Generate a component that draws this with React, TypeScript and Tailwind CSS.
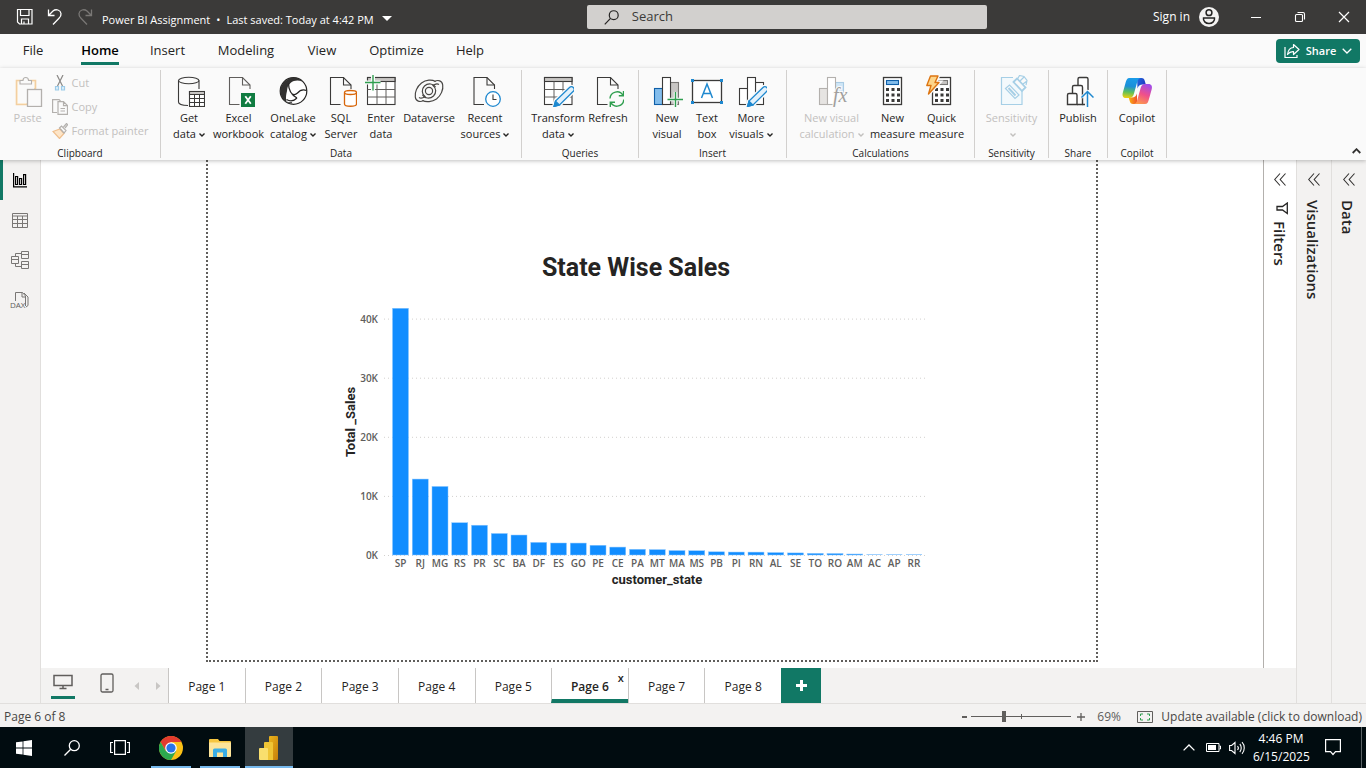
import React from "react";

type Kids = { children: React.ReactNode };

const INK = "#3b3a39";
const DIM = "#b3b0ad";
const BLUE = "#1e88cf";
const GREEN = "#2f9e4f";

function Ico({ children }: Kids) {
  return (
    <svg width="32" height="32" viewBox="0 0 32 32" fill="none" stroke={INK} strokeWidth="1.1" className="block shrink-0" aria-hidden="true">
      {children}
    </svg>
  );
}

function Doc({ x = 5.5 }: { x?: number }) {
  return (
    <g transform={`translate(${x} 0)`}>
      <path d="M10 29.5H0V2.500H13L20.500 10V14" fill="none" />
      <path d="M13 2.500V10H20.500" />
    </g>
  );
}

function Pencil({ x }: { x: number }) {
  return (
    <g transform={`translate(${x} 0)`} stroke={BLUE}>
      <path d="M0.500 31.500 2 26 16 12.500a2.500 2.500 0 0 1 3.800 3.800L6 30Z" fill="#fafafa" stroke="#fafafa" strokeWidth="4" />
      <path d="M0.500 31.500 2 26 16 12.500a2.500 2.500 0 0 1 3.800 3.800L6 30Z" fill="#e3f1fb" strokeWidth="1.300" />
      <path d="M0.500 31.500 2 26 6 30Z" fill={BLUE} />
    </g>
  );
}

const GetDataIcon = () => (
  <Ico>
    <path d="M15 30.500C9 30.500 5.500 29 5.500 27V5.500M26 5.500V14" />
    <ellipse cx="15.750" cy="5.500" rx="10.250" ry="3.300" />
    <rect x="16.500" y="16.500" width="15" height="15" fill="#fff" />
    <path d="M16.500 16.500h15v3h-15z" fill="#c8c6c4" />
    <path d="M16.500 23.500h15M16.500 27.500h15M21.500 19.500v12M26.500 19.500v12" strokeWidth="1" />
  </Ico>
);

const ExcelIcon = () => (
  <Ico>
    <g stroke="#605e5c"><Doc x={6.5} /></g>
    <rect x="18" y="18" width="14" height="14" fill="#107c41" stroke="none" />
    <path d="m22.300 21.300 5.500 7.500M27.800 21.300l-5.500 7.500" stroke="#fff" strokeWidth="1.800" />
  </Ico>
);

const OneLakeIcon = () => (
  <Ico>
    <circle cx="16.500" cy="16" r="13.300" fill="#fff" stroke="#252423" strokeWidth="1.200" />
    <path d="M10.500 4.500C15 1 22 2 25 6.500c-4-1.500-8-1.200-11.500 1.500L11 11c-1.500 6 .5 11.500 4.500 17.500C8 28.500 2.500 22 3.300 14.500 4 10 7 6.500 10.500 4.500Z" fill="#323130" stroke="none" />
    <path d="M11.500 9.500c1 6 3.500 10.500 8.500 13-2.500 4-6 6-10.500 4-1.500-5 .5-10 2-17Z" fill="#fff" stroke="none" />
    <path d="M11.500 8.500c0 7 3 11.500 8.500 14.500M20 23c-3 3-7 3.500-10.500 1.500M14.500 18.500c2.500 2 4 1.500 6-.5 2.500-3 5-4 9-2.500" strokeWidth="1.300" stroke="#252423" />
  </Ico>
);

const SqlIcon = () => (
  <Ico>
    <Doc />
    <path d="M19.500 17.500v11.500c0 3 12 3 12 0V17.500" fill="#fff" stroke="#d8660a" strokeWidth="1.300" />
    <ellipse cx="25.500" cy="17.500" rx="6" ry="2" fill="#fff" stroke="#d8660a" strokeWidth="1.300" />
  </Ico>
);

function TableShape({ x }: { x: number }) {
  return (
    <g transform={`translate(${x} 0)`}>
      <rect x="0" y="2.500" width="27.500" height="27" fill="#fff" />
      <rect x="0" y="2.500" width="27.500" height="4" fill="#c8c6c4" />
      <path d="M0 14.500h27.500M0 22h27.500M9.500 6.500v23M18.500 6.500v23" stroke="#605e5c" strokeWidth="1" />
    </g>
  );
}

const EnterIcon = () => (
  <Ico>
    <TableShape x={2.5} />
    <path d="M0 7.500h15.500M8 0v15.500" stroke="#fafafa" strokeWidth="4" />
    <path d="M0 7.500h15.500M8 0v15.500" stroke={GREEN} strokeWidth="1.400" />
  </Ico>
);

const DataverseIcon = () => (
  <Ico>
    <g strokeWidth="1.200" stroke="#484644">
      <path d="M22.500 6.500C19 4.500 13 4.500 8.500 8 4 11.500 1.500 17.500 2.300 22c.5 4.500 4.700 5.500 8.200 3.500" />
      <path d="M9.500 25.500C13 27.500 19 27 23.500 24 28 20.500 30.500 14.500 29.700 10c-.5-4.500-4.700-5.500-8.200-3.500" />
      <path d="M22.500 12C20.500 8.500 15 7.800 11.500 11 8.500 14 8.500 19 12 21.500c-2 1.500-4.500 2-6 1" />
      <path d="M9.500 20c2 3.500 7.500 4.200 11 1 3-3 3-8-.5-10.500 2-1.500 4.500-2 6-1" />
      <circle cx="16" cy="16" r="3.600" />
    </g>
  </Ico>
);

const RecentIcon = () => (
  <Ico>
    <Doc x={5} />
    <circle cx="24" cy="24" r="7.300" fill="#fff" stroke={BLUE} strokeWidth="1.300" />
    <path d="M24 19.500v5h3.500" />
  </Ico>
);

const TransformIcon = () => (
  <Ico>
    <TableShape x={2.5} />
    <Pencil x={11.5} />
  </Ico>
);

const RefreshIcon = () => (
  <Ico>
    <Doc x={5.5} />
    <g stroke={GREEN} strokeWidth="1.400">
      <path d="M18 23.500a7 7 0 0 1 13-3.200M31.800 24.500a7 7 0 0 1-13 3.200" />
      <path d="M31.500 16v4.700h-4.700M18.300 32v-4.700h4.700" />
    </g>
  </Ico>
);

const NewVisualIcon = () => (
  <Ico>
    <rect x="3.500" y="13.500" width="8" height="16" fill="#83bdec" stroke="#0f5fa8" />
    <rect x="19.500" y="7.500" width="8" height="22" fill="#c8c6c4" stroke="#797775" />
    <rect x="11.500" y="2.500" width="8" height="27" fill="#fff" />
    <path d="M16.500 24.500H32M24.500 17v15.500" stroke="#fafafa" strokeWidth="3.500" />
    <path d="M16.500 24.500H32M24.500 17v15.500" stroke={GREEN} strokeWidth="1.400" />
  </Ico>
);

const TextBoxIcon = () => (
  <Ico>
    <rect x="1.500" y="5.500" width="29" height="22" fill="#fff" strokeWidth="1.300" />
    <path d="M0 4h3v3H0zM29 4h3v3h-3zM0 26h3v3H0zM29 26h3v3h-3z" fill={BLUE} stroke="none" />
    <path d="m10.500 23 5.500-14 5.500 14M12.300 18.500h7.400" stroke={BLUE} strokeWidth="1.500" />
  </Ico>
);

const MoreVisualsIcon = () => (
  <Ico>
    <rect x="4.500" y="13.500" width="8" height="16" fill="#fff" />
    <rect x="20.500" y="7.500" width="8" height="22" fill="#fff" />
    <rect x="12.500" y="2.500" width="8" height="27" fill="#fff" />
    <Pencil x={12} />
  </Ico>
);

const VisualCalcIcon = () => (
  <Ico>
    <g stroke={DIM}>
      <rect x="3.500" y="13.500" width="8" height="16" fill="#e6e4e2" />
      <rect x="19.500" y="7.500" width="8" height="10" fill="#cfe6f7" stroke="#a9cbe4" />
      <rect x="11.500" y="2.500" width="8" height="27" fill="#fff" />
    </g>
    <text x="17" y="27" fontSize="20" fontStyle="italic" fontFamily="'Liberation Serif', serif" fill="#a19f9d" stroke="#fafafa" strokeWidth="2" paintOrder="stroke">fx</text>
  </Ico>
);

function Calculator({ gray }: { gray?: boolean }) {
  return (
    <>
      <rect x="6.500" y="2.500" width="18" height="27" fill="#fff" strokeWidth="1.300" />
      <rect x="9.500" y="5.500" width="12" height="4" fill={gray ? "#c8c6c4" : "#83bdec"} stroke={gray ? "#797775" : "#0f5fa8"} />
      {[13, 18.5, 24].map((y) => (
        <path key={y} d={`M9 ${y}h3v3h-3zM14.500 ${y}h3v3h-3zM20 ${y}h3v3h-3z`} fill={INK} stroke="none" />
      ))}
    </>
  );
}

const MeasureIcon = () => <Ico><Calculator /></Ico>;

const QuickIcon = () => (
  <Ico>
    <Calculator gray />
    <path d="M4.500 1H12L9 7.500h4L2.500 19l2.500-8.500H.800Z" fill="#fafafa" stroke="#fafafa" strokeWidth="4" />
    <path d="M4.500 1H12L9 7.500h4L2.500 19l2.500-8.500H.800Z" fill="#fdd58a" stroke="#dd7410" strokeWidth="1.400" strokeLinejoin="round" />
  </Ico>
);

const SensitivityIcon = () => (
  <Ico>
    <g stroke="#a6cfe6" strokeWidth="1.200">
      <path d="M17 2.500H5.500v27h20.500V16" fill="#f3f9fc" />
      <path d="m9.500 13.500 4-3.500 9.500 10-4 3.500Z" fill="#fafafa" />
      <path d="m12.500 13 7 7.500" strokeWidth="2" />
      <path d="m17.500 7 3.500-3.500 8.500 9L26 16Z" fill="#fafafa" strokeWidth="1.800" />
      <path d="m21.500 4 2-3.500 4.500 1 3 4-1 4.500M24 6l4-4M27 9l4-3" />
    </g>
  </Ico>
);

const PublishIcon = () => (
  <Ico>
    <g strokeWidth="1.400" fill="#fff">
      <path d="M16 10.500V4a1.500 1.500 0 0 1 1.500-1.500h7A1.500 1.500 0 0 1 26 4v11" />
      <path d="M10.500 18.500V12A1.500 1.500 0 0 1 12 10.500h7A1.500 1.500 0 0 1 20.500 12v17.500H15" />
      <path d="M5.500 29.500V20A1.500 1.500 0 0 1 7 18.500h6.500A1.500 1.500 0 0 1 15 20v9.500ZM20.500 29.500h2.500" />
    </g>
    <path d="M25.500 32V16.500M19.500 22.500l6-6 6 6" stroke="#fafafa" strokeWidth="3" />
    <path d="M25.500 32V16.500M19.500 22.500l6-6 6 6" stroke={BLUE} strokeWidth="1.500" />
  </Ico>
);

const CopilotIcon = () => (
  <Ico>
    <defs>
      <linearGradient id="cpA" x1="0.300" y1="0" x2="0.200" y2="1">
        <stop offset="0" stopColor="#1a9be8" />
        <stop offset="0.400" stopColor="#1b8fd8" />
        <stop offset="0.700" stopColor="#5fc05a" />
        <stop offset="1" stopColor="#f5cf0c" />
      </linearGradient>
      <linearGradient id="cpB" x1="0.700" y1="0" x2="0.300" y2="1">
        <stop offset="0" stopColor="#a24be8" />
        <stop offset="0.500" stopColor="#f0508a" />
        <stop offset="1" stopColor="#fd9a4c" />
      </linearGradient>
      <linearGradient id="cpC" x1="0" y1="0" x2="1" y2="0.500">
        <stop offset="0" stopColor="#1f6fe0" />
        <stop offset="1" stopColor="#2337c0" />
      </linearGradient>
      <linearGradient id="cpD" x1="0" y1="0" x2="1" y2="0">
        <stop offset="0" stopColor="#fbb40f" />
        <stop offset="1" stopColor="#f0522a" />
      </linearGradient>
    </defs>
    <g stroke="none">
      <path d="M16 3h4.500c2 0 2.800 1.300 3.300 3l1 3.500h-3c-3 0-4.500 1.500-5.300 4Z" fill="url(#cpC)" />
      <path d="M16 29h-4c-2 0-2.800-1.300-3.300-3l-1-3.500h3c3 0 4.500-1.500 5.300-4Z" fill="url(#cpD)" />
      <path d="M8.500 3H20c-2 0-3 1.300-3.800 4L13 18.500c-.8 2.800-2 4.500-4.700 4.500H5c-3 0-4-2.300-3.200-5.300L4.500 8C5.300 5 6 3 8.500 3Z" fill="url(#cpA)" />
      <path d="M24 29H12.500c2 0 3-1.300 3.800-4l3.200-11.500C20.300 10.700 21.500 9 24.200 9h3.300c3 0 4 2.300 3.200 5.300L28 24c-.8 3-1.500 5-4 5Z" fill="url(#cpB)" />
    </g>
  </Ico>
);

const PasteIcon = () => (
  <Ico>
    <path d="M4.500 5.500H23.500V14h-8v15.500h-11Z" fill="#fef4e2" stroke="#f3cfa0" strokeWidth="1.600" />
    <path d="M6 7.500h16V14h-7v14H6Z" fill="#fafafa" stroke="none" />
    <path d="M8 9V5.500h3c0-4 5.500-4 5.500 0h3V9Z" fill="#fafafa" stroke={DIM} />
    <rect x="15.500" y="14.500" width="14" height="17" fill="#fafafa" stroke={DIM} strokeWidth="1.300" />
  </Ico>
);

function Chevron({ className = "inline-block" }: { className?: string }) {
  return (
    <svg width="6" height="6" viewBox="0 0 6 6" fill="none" stroke="currentColor" strokeWidth="1.400" className={className} aria-hidden="true">
      <path d="M.5 1.500 3 4l2.500-2.500" />
    </svg>
  );
}

type Cmd = { w: string; icon: React.ReactNode; a: string; b?: string; drop?: boolean; off?: boolean };

function Command({ w, icon, a, b, drop, off }: Cmd) {
  return (
    <button disabled={off} className={`flex h-full shrink-0 flex-col items-center ${w} ${off ? "text-[#c2c0be]" : "text-[#252423]"}`}>
      {icon}
      <span className="mt-[3px] text-center text-[11px] leading-4 whitespace-nowrap">
        {a}
        <br />
        {b}
        {drop && <Chevron className="ml-[3px] inline-block" />}
      </span>
    </button>
  );
}

function Group({ w, name, children }: Kids & { w: string; name: string }) {
  return (
    <section aria-label={name} className={`flex shrink-0 flex-col border-r border-[#d2d0ce] ${w}`}>
      <div className="flex h-[76px] shrink-0 justify-center pt-[5px]">{children}</div>
      <div className="text-center text-[10px] leading-[14px] text-[#252423]">{name}</div>
    </section>
  );
}

function TitleBar() {
  return (
    <header className="flex h-[34px] items-center bg-[#3b3a39] text-xs text-white">
      <div className="flex w-[587px] shrink-0 items-center pl-4">
        <button aria-label="Save" className="w-[31px]">
          <svg width="18" height="18" viewBox="0 0 18 18" fill="none" stroke="#fff" strokeWidth="1.200"><path d="M1.500 1.500h14.500v14.500H3.500l-2-2ZM4.500 1.500v6h8.500v-6M5.500 16v-5h7v5M8 16v-2.500" /></svg>
        </button>
        <button aria-label="Undo" className="w-[30px]">
          <svg width="16" height="18" viewBox="0 0 16 18" fill="none" stroke="#fff" strokeWidth="1.300"><path d="M1.500 1.500v6h6M1.500 7.500 6 3c3-2.500 7.500-1 8 2.500.3 2-.5 3.300-2 4.800L6 16.500" /></svg>
        </button>
        <button aria-label="Redo" disabled className="w-[25px]">
          <svg width="16" height="18" viewBox="0 0 16 18" fill="none" stroke="#797775" strokeWidth="1.300"><path d="M14.500 1.500v6h-6M14.500 7.500 10 3C7 .5 2.500 2 2 5.500c-.3 2 .5 3.300 2 4.800l6 6.200" /></svg>
        </button>
        <button className="flex items-center gap-[6px] pt-[6px] text-[11px] whitespace-nowrap">
          <span>Power BI Assignment</span>
          <span>•</span>
          <span>Last saved: Today at 4:42 PM</span>
          <svg width="10" height="5" viewBox="0 0 10 5" className="mb-1 ml-[2px]" fill="#fff"><path d="M0 0h10L5 5Z" /></svg>
        </button>
      </div>
      <label className="flex h-6 w-[400px] shrink items-center rounded-[2px] bg-[#d2d0ce] pl-[17px] text-[#3b3a39]">
        <svg width="17" height="17" viewBox="0 0 17 17" fill="none" stroke="#252423" strokeWidth="1.300" aria-hidden="true"><circle cx="10.500" cy="6" r="4.800" /><path d="M7 9.500.800 16" /></svg>
        <input type="text" aria-label="Search" placeholder="Search" className="ml-3 w-full bg-transparent text-[13px] outline-none placeholder:text-[#3b3a39]" />
      </label>
      <div className="ml-auto flex items-center">
        <button className="flex items-center gap-[9px]">
          Sign in
          <svg width="20" height="20" viewBox="0 0 20 20"><circle cx="10" cy="10" r="10" fill="#f3f2f1" /><g fill="none" stroke="#252423" strokeWidth="1.500"><circle cx="10" cy="5.700" r="2.900" /><path d="M4.500 11h11c.5 3-2 5.500-5.500 5.500S4 14 4.500 11Z" /></g></svg>
        </button>
        <div className="flex pl-[15px]">
          <button aria-label="Minimize" className="flex h-[34px] w-11 items-center justify-center"><svg width="12" height="12" viewBox="0 0 12 12" stroke="#fff"><path d="M1 6.500h10" /></svg></button>
          <button aria-label="Restore" className="flex h-[34px] w-11 items-center justify-center"><svg width="12" height="12" viewBox="0 0 12 12" stroke="#fff" fill="none" strokeWidth="1.100"><rect x="1.500" y="3.500" width="7" height="7" rx="1" /><path d="M3.500 1.500H9A1.500 1.500 0 0 1 10.500 3v5.500" /></svg></button>
          <button aria-label="Close" className="flex h-[34px] w-11 items-center justify-center"><svg width="12" height="12" viewBox="0 0 12 12" stroke="#fff" strokeWidth="1.200"><path d="m1 1 10 10M11 1 1 11" /></svg></button>
        </div>
      </div>
    </header>
  );
}

function MenuBar() {
  const tabs: [string, string][] = [
    ["File", "w-[66px]"], ["Home", "w-[68px]"], ["Insert", "w-[67px]"], ["Modeling", "w-[90px]"],
    ["View", "w-[62px]"], ["Optimize", "w-[87px]"], ["Help", "w-[60px]"],
  ];
  return (
    <nav className="flex h-[34px] items-center bg-[#fafafa] text-[13px] text-[#252423]">
      {tabs.map(([name, w]) => (
        <button key={name} className={`flex h-full shrink-0 justify-center pt-[6px] ${w}`}>
          <span className={name === "Home" ? "h-[25px] border-b-[3px] border-[#117865] leading-5 font-semibold text-black" : "leading-5"}>{name}</span>
        </button>
      ))}
      <button className="mr-[6px] ml-auto flex h-6 w-[84px] items-center justify-center gap-[6px] rounded-[4px] bg-[#117865] text-[11px] font-semibold text-white">
        <svg width="16" height="16" viewBox="0 0 16 16" fill="none" stroke="#fff" strokeWidth="1.200"><path d="M1 4v10.500h12V12" /><path d="M9.500 1.500 15 6.500l-5.500 5V8.700C7 8.500 5 9.500 3.500 11.500 4 7.500 6 4.700 9.500 4.500Z" strokeLinejoin="round" /></svg>
        Share
        <svg width="10" height="10" viewBox="0 0 10 10" fill="none" stroke="#fff" strokeWidth="1.300"><path d="m.7 2.700 4.300 4.300 4.300-4.300" /></svg>
      </button>
    </nav>
  );
}

function SmallCmd({ children, name }: Kids & { name: string }) {
  return (
    <button disabled className="flex h-6 items-center gap-1 text-[11px] whitespace-nowrap text-[#c2c0be]">
      <svg width="16" height="16" viewBox="0 0 16 16" fill="none" stroke={DIM} strokeWidth="1.200" aria-hidden="true">{children}</svg>
      {name}
    </button>
  );
}

function Ribbon() {
  return (
    <div className="relative z-10 flex h-[92px] items-stretch bg-[#fafafa] pt-[2px] pb-[2px] shadow-[0_1px_4px_rgba(0,0,0,0.25)]">
      <Group w="w-[161px]" name="Clipboard">
        <Command w="w-8" icon={<PasteIcon />} a="Paste" off />
        <div className="-mt-[4px] ml-2 flex flex-col">
          <SmallCmd name="Cut">
            <path d="M5 0l5.500 11M11 0 5.500 11" stroke="#8a8886" />
            <path d="M3.500 11.500h3v3.500h-3zM9.500 11.500h3v3.500h-3z" stroke="#9ccbe8" fill="#dceefa" />
          </SmallCmd>
          <SmallCmd name="Copy">
            <path d="M5 13.500H.6V.6h6.500L8.500 2" />
            <path d="M6 2.600h5.500l4 4v8.800H6ZM11.500 2.600v4h4M8.500 9.500h4.500M8.500 12h4.500" />
          </SmallCmd>
          <SmallCmd name="Format painter">
            <path d="m1 8.500 7-2.500 4 4.500-4.500 5Z" fill="#fde5c8" stroke="#efbf8e" />
            <path d="m7.500 5 2-2 4.500 4.500-2 2.500ZM11.500 4l3-3.500 1.200 1.200L13 5" />
          </SmallCmd>
        </div>
      </Group>
      <Group w="w-[361px]" name="Data">
        <div className="flex pr-[3px]">
          <Command w="w-[46px]" icon={<GetDataIcon />} a="Get" b="data" drop />
          <Command w="w-[53px]" icon={<ExcelIcon />} a="Excel" b="workbook" />
          <Command w="w-[56px]" icon={<OneLakeIcon />} a="OneLake" b="catalog" drop />
          <Command w="w-[40px]" icon={<SqlIcon />} a="SQL" b="Server" />
          <Command w="w-[40px]" icon={<EnterIcon />} a="Enter" b="data" />
          <Command w="w-[56px]" icon={<DataverseIcon />} a="Dataverse" />
          <Command w="w-[56px]" icon={<RecentIcon />} a="Recent" b="sources" drop />
        </div>
      </Group>
      <Group w="w-[117px]" name="Queries">
        <Command w="w-[56px]" icon={<TransformIcon />} a="Transform" b="data" drop />
        <Command w="w-[44px]" icon={<RefreshIcon />} a="Refresh" />
      </Group>
      <Group w="w-[148px]" name="Insert">
        <div className="flex pr-[3px]">
          <Command w="w-[40px]" icon={<NewVisualIcon />} a="New" b="visual" />
          <Command w="w-[40px]" icon={<TextBoxIcon />} a="Text" b="box" />
          <Command w="w-[48px]" icon={<MoreVisualsIcon />} a="More" b="visuals" drop />
        </div>
      </Group>
      <Group w="w-[188px]" name="Calculations">
        <Command w="w-[74px]" icon={<VisualCalcIcon />} a="New visual" b="calculation" drop off />
        <Command w="w-[48px]" icon={<MeasureIcon />} a="New" b="measure" />
        <Command w="w-[50px]" icon={<QuickIcon />} a="Quick" b="measure" />
      </Group>
      <Group w="w-[74px]" name="Sensitivity">
        <Command w="w-[60px]" icon={<SensitivityIcon />} a="Sensitivity" drop off />
      </Group>
      <Group w="w-[59px]" name="Share">
        <Command w="w-[50px]" icon={<PublishIcon />} a="Publish" />
      </Group>
      <Group w="w-[59px]" name="Copilot">
        <Command w="w-[50px]" icon={<CopilotIcon />} a="Copilot" />
      </Group>
      <button aria-label="Collapse ribbon" className="mr-[5px] ml-auto self-end pb-1">
        <svg width="9" height="6" viewBox="0 0 9 6" fill="none" stroke="#323130" strokeWidth="1.800"><path d="m.7 5 3.800-3.800L8.300 5" /></svg>
      </button>
    </div>
  );
}

function ViewRail() {
  const btn = "flex h-10 w-full items-center justify-center";
  return (
    <nav className="flex w-[41px] shrink-0 flex-col border-r border-[#e1dfdd] bg-[#f3f2f1]">
      <button aria-label="Report view" className={`${btn} border-l-[3px] border-[#117865] pr-[3px]`}>
        <svg width="14" height="15" viewBox="0 0 14 15" fill="none" stroke="#000" strokeWidth="1.200"><path d="M.6 0v13.900H14" /><path d="M2.600 3.500h2v8h-2zM6.600 5.500h2v6h-2zM10.600 1.600h2v9.900h-2z" /></svg>
      </button>
      <button aria-label="Table view" className={btn}>
        <svg width="16" height="15" viewBox="0 0 16 15" fill="none" stroke="#797775"><path d="M.5.500h15v14H.5ZM.5 3h15M.5 6.500h15M.5 10.500h15M5.500 3v11.500M10.500 3v11.500" /></svg>
      </button>
      <button aria-label="Model view" className={btn}>
        <svg width="18" height="18" viewBox="0 0 18 18" fill="none" stroke="#797775"><path d="M.5 5.500h7v7h-7ZM.5 8.500h7M10.500.500h7v7h-7ZM10.500 3.500h7M10.500 10.500h7v7h-7ZM10.500 13.500h7M4.500 5.500v-3h6M4.500 12.500v3h6" /></svg>
      </button>
      <button aria-label="DAX query view" className={btn}>
        <svg width="20" height="18" viewBox="0 0 20 18" fill="none" stroke="#797775"><path d="M5.500 10V1.500h7l3 3.500v10M12 1.500V6h4M14 2l4 4v8.500l-2 1.500" /><text x="0" y="16.500" fontSize="8" fontFamily="'Open Sans', sans-serif" stroke="none" fill="#605e5c">DAX</text></svg>
      </button>
    </nav>
  );
}

const SALES: [string, number][] = [
  ["SP", 41.75], ["RJ", 12.85], ["MG", 11.6], ["RS", 5.46], ["PR", 5.04], ["SC", 3.64], ["BA", 3.38],
  ["DF", 2.14], ["ES", 2.03], ["GO", 2.02], ["PE", 1.65], ["CE", 1.34], ["PA", 0.97], ["MT", 0.91],
  ["MA", 0.75], ["MS", 0.72], ["PB", 0.54], ["PI", 0.5], ["RN", 0.49], ["AL", 0.41], ["SE", 0.35],
  ["TO", 0.28], ["RO", 0.25], ["AM", 0.15], ["AC", 0.08], ["AP", 0.07], ["RR", 0.05],
];

function SalesChart() {
  const base = 271;
  const perK = 5.91;
  return (
    <figure className="w-full max-w-[592px]">
      <h2 className="h-[34px] text-center font-[Roboto,sans-serif] text-[25px] leading-9 font-bold text-[#252423]">State Wise Sales</h2>
      <svg viewBox="0 0 592 306" className="block w-full" role="img" aria-label="Total _Sales by customer_state">
        <g fontFamily="'Open Sans', sans-serif" fontSize="10" fontWeight="600" fill="#605e5c">
          {[0, 10, 20, 30, 40].map((k) => (
            <g key={k}>
              <line x1="44" x2="588" y1={base + 0.5 - k * perK} y2={base + 0.5 - k * perK} stroke="#d2d0ce" strokeDasharray="1 3" />
              <text x="38" y={base + 4 - k * perK} textAnchor="end">{k}K</text>
            </g>
          ))}
          {SALES.map(([name, v], i) => {
            const cx = 60.5 + i * 19.75;
            const h = Math.max(v * perK, 1);
            return (
              <g key={name}>
                <rect x={cx - 8} y={base - h} width="16" height={h} fill={v < 0.1 ? "#a0d1ff" : "#118dff"} stroke={v < 0.1 ? "none" : "#8cc7ff"} strokeWidth="0.500" />
                <text x={cx} y="283" textAnchor="middle">{name}</text>
              </g>
            );
          })}
        </g>
        <g fontFamily="Roboto, sans-serif" fontSize="13" fontWeight="700" fill="#252423" textAnchor="middle">
          <text x="317" y="300">customer_state</text>
          <text transform="translate(15 138) rotate(-90)">Total _Sales</text>
        </g>
      </svg>
    </figure>
  );
}

function Expand() {
  return (
    <svg width="12" height="13" viewBox="0 0 12 13" fill="none" stroke="#323130" strokeWidth="1.100" aria-hidden="true">
      <path d="M6 .5.700 6.500l5.300 6M11.500.500 6.200 6.500l5.300 6" />
    </svg>
  );
}

function SidePane({ name, className, icon }: { name: string; className: string; icon?: React.ReactNode }) {
  return (
    <aside className={`flex shrink-0 flex-col items-center pt-[13px] ${className}`}>
      <button aria-label={`Expand ${name}`}><Expand /></button>
      {icon}
      <h2 className={`text-[15px] leading-5 font-semibold text-[#252423] [writing-mode:vertical-rl] ${icon ? "mt-[6px]" : "mt-[14px] mr-[3px]"}`}>{name}</h2>
    </aside>
  );
}

function PageTabs() {
  return (
    <div className="flex h-[35px] shrink-0 bg-[#f3f2f1] text-xs text-[#252423]">
      <div className="flex w-[127px] shrink-0 items-start">
        <button aria-label="Desktop layout" className="ml-[10px] flex h-[31px] w-6 flex-col items-center justify-between border-b-[3px] border-[#117865] pt-[6px]">
          <svg width="20" height="16" viewBox="0 0 20 16" fill="none" stroke="#605e5c" strokeWidth="1.500"><path d="M1 1.500h18v10H1ZM10 12v2.500M6.500 14.500h7" /></svg>
        </button>
        <button aria-label="Mobile layout" className="ml-[25px] pt-[5px]">
          <svg width="14" height="20" viewBox="0 0 14 20" fill="none" stroke="#605e5c" strokeWidth="1.300"><rect x="1" y="1" width="12" height="18" rx="1.500" /><path d="M5.500 16.500h3" strokeWidth="1.500" /></svg>
        </button>
        <button aria-label="Previous pages" className="ml-5 pt-[14px]"><svg width="5" height="8" viewBox="0 0 5 8" fill="#c8c6c4"><path d="M5 0v8L.500 4Z" /></svg></button>
        <button aria-label="Next pages" className="ml-[17px] pt-[14px]"><svg width="5" height="8" viewBox="0 0 5 8" fill="#c8c6c4"><path d="M0 0v8l4.500-4Z" /></svg></button>
      </div>
      <div className="grid w-[613px] grid-cols-8 bg-white">
        {[1, 2, 3, 4, 5, 6, 7, 8].map((n) =>
          n === 6 ? (
            <div key={n} className="relative border-b-4 border-l border-b-[#117865] border-l-[#c8c6c4]">
              <button aria-current="page" className="h-full w-full pt-[6px] font-semibold">Page 6</button>
              <button aria-label="Delete page" className="absolute top-[2px] right-1 text-[11px] leading-4 font-semibold">x</button>
            </div>
          ) : (
            <button key={n} className="border-l border-[#c8c6c4] pt-[2px]">Page {n}</button>
          ),
        )}
      </div>
      <button aria-label="New page" className="flex w-10 shrink-0 items-center justify-center bg-[#117865]">
        <svg width="11" height="11" viewBox="0 0 11 11" stroke="#fff" strokeWidth="3"><path d="M5.500 0v11M0 5.500h11" /></svg>
      </button>
    </div>
  );
}

function StatusBar() {
  return (
    <footer className="flex h-6 shrink-0 items-center border-t border-[#e1dfdd] bg-[#f3f2f1] pt-[2px] pr-1 pl-1 text-xs text-[#484644]">
      <span>Page 6 of 8</span>
      <div className="ml-auto flex items-center">
        <button aria-label="Zoom out" className="flex h-4 w-[9px] items-center"><svg width="5" height="2"><path d="M0 0h5v2H0z" fill="#605e5c" /></svg></button>
        <div className="relative mr-[6px] flex items-center">
          <span className="absolute left-[50px] h-[5px] w-px bg-[#605e5c]" />
          <input
            type="range" min="0" max="100" defaultValue="32" aria-label="Zoom" aria-valuetext="69%"
            className="h-[11px] w-[100px] appearance-none bg-[linear-gradient(#605e5c,#605e5c)] bg-[length:100%_1px] bg-center bg-no-repeat [&::-webkit-slider-thumb]:h-[11px] [&::-webkit-slider-thumb]:w-1 [&::-webkit-slider-thumb]:appearance-none [&::-webkit-slider-thumb]:bg-[#605e5c]"
          />
        </div>
        <button aria-label="Zoom in"><svg width="8" height="8" viewBox="0 0 8 8" stroke="#605e5c" strokeWidth="1.300"><path d="M4 0v8M0 4h8" /></svg></button>
        <span className="w-[52px] pl-3 text-[#605e5c]">69%</span>
        <button aria-label="Fit to page" className="mr-2">
          <svg width="16" height="12" viewBox="0 0 16 12" fill="none" stroke="#605e5c"><path d="M.5.500h15v11H.5Z" /><path d="M3.500 5V3h2.500M10 3h2.500v2M12.500 7v2H10M6 9H3.500V7" stroke="#2f9e4f" /></svg>
        </button>
        <a href="#update" className="whitespace-nowrap">Update available (click to download)</a>
      </div>
    </footer>
  );
}

function Taskbar() {
  const item = "flex h-full items-center justify-center";
  return (
    <footer className="flex h-[41px] shrink-0 items-stretch bg-[#010c10] text-white">
      <button aria-label="Start" className={`${item} w-12`}>
        <svg width="16" height="16" viewBox="0 0 16 16" fill="#fff"><path d="M0 2.300 6.600 1.400v6.200H0ZM7.400 1.300 16 0v7.600H7.400ZM0 8.400h6.600v6.200L0 13.700ZM7.400 8.400H16V16l-8.600-1.300Z" /></svg>
      </button>
      <button aria-label="Search Windows" className={`${item} w-12`}>
        <svg width="16" height="16" viewBox="0 0 16 16" fill="none" stroke="#fff" strokeWidth="1.300"><circle cx="10.300" cy="5.700" r="5" /><path d="M6.700 9.300.500 15.500" /></svg>
      </button>
      <button aria-label="Task view" className={`${item} w-12`}>
        <svg width="20" height="15" viewBox="0 0 20 15" fill="none" stroke="#fff" strokeWidth="1.200"><path d="M4.600.600h10.800v13.800H4.600ZM3 2.500H.6v10H3M17 2.500h2.400v10H17" /></svg>
      </button>
      <button aria-label="Chrome" className={`${item} mr-[9px] ml-[7px] w-10 border-b-2 border-[#76b9ed] pt-[2px]`}>
        <svg width="24" height="24" viewBox="0 0 24 24">
          <circle cx="12" cy="12" r="12" fill="#fbc116" />
          <path d="M1.600 6A12 12 0 0 1 22.400 6H12L6.800 15Z" fill="#e33b2e" />
          <path d="M1.600 6A12 12 0 0 0 12 24l5.200-9H12L6.800 15Z" fill="#2da94f" />
          <circle cx="12" cy="12" r="5.800" fill="#fff" />
          <circle cx="12" cy="12" r="4.600" fill="#2a74e8" />
        </svg>
      </button>
      <button aria-label="File Explorer" className={`${item} mr-[5px] w-10 border-b-2 border-[#76b9ed] pt-[2px]`}>
        <svg width="22" height="18" viewBox="0 0 22 18"><path d="M0 1a1 1 0 0 1 1-1h8l1.500 2H21a1 1 0 0 1 1 1v14H0Z" fill="#f6c640" /><path d="M0 3.500h22V17a1 1 0 0 1-1 1H0Z" fill="#fde59a" /><path d="M4 18v-7a1.500 1.500 0 0 1 1.500-1.500h11A1.500 1.500 0 0 1 18 11v7h-4v-4.500H8V18Z" fill="#3aaee6" /></svg>
      </button>
      <button aria-label="Power BI Desktop" className={`${item} w-12 border-b-2 border-[#76b9ed] bg-[#343c3f] pt-[2px]`}>
        <svg width="20" height="24" viewBox="0 0 20 24">
          <defs><linearGradient id="pbiA" x1="0" y1="0" x2="1" y2="1"><stop offset="0" stopColor="#eab51c" /><stop offset="1" stopColor="#c57d0a" /></linearGradient></defs>
          <rect x="10" width="9" height="24" rx="1" fill="url(#pbiA)" />
          <path d="M5 7a1 1 0 0 1 1-1h7a1 1 0 0 1 1 1v17H5Z" fill="#efc535" />
          <path d="M0 13a1 1 0 0 1 1-1h7a1 1 0 0 1 1 1v11H1a1 1 0 0 1-1-1Z" fill="#f9df6d" />
        </svg>
      </button>
      <div className="ml-auto flex items-center">
        <button aria-label="Show hidden icons"><svg width="12" height="7" viewBox="0 0 12 7" fill="none" stroke="#fff" strokeWidth="1.300"><path d="m.6 6.400 5.400-5.400 5.400 5.400" /></svg></button>
        <svg width="15" height="9" viewBox="0 0 15 9" className="ml-[11px]" fill="none" stroke="#fff"><path d="M.5.500h12.500v8H.5ZM13.500 3h1v3h-1" /><path d="M2 2h8v5H2z" fill="#fff" stroke="none" /></svg>
        <svg width="17" height="14" viewBox="0 0 17 14" className="ml-2" fill="none" stroke="#fff" strokeWidth="1.100"><path d="M.6 4.500h2L6 1.500v11l-3.400-3h-2ZM8.500 5c.9 1 .9 3 0 4M10.800 3c1.900 2 1.900 6 0 8M13 1.200c3 3 3 8.600 0 11.600" /></svg>
        <div className="ml-[7px] w-[56px] text-center text-xs leading-[18px] whitespace-nowrap">4:46 PM<br />6/15/2025</div>
        <button aria-label="Notifications" className="ml-[16px]"><svg width="16" height="17" viewBox="0 0 16 17" fill="none" stroke="#fff" strokeWidth="1.200"><path d="M.6.600h14.800v12H10.500L8 15.500 5.500 12.600H.6Z" /></svg></button>
        <span className="ml-5 h-full w-px bg-[#5a6265]" />
        <span className="w-1" />
      </div>
    </footer>
  );
}

export default function App() {
  return (
    <div className="flex min-h-screen flex-col overflow-hidden bg-white font-['Open_Sans','Noto_Sans',sans-serif]">
      <TitleBar />
      <MenuBar />
      <Ribbon />
      <div className="flex flex-1">
        <ViewRail />
        <div className="flex min-w-0 flex-1 flex-col">
          <div className="flex flex-1">
            <main className="flex flex-1 justify-center bg-white pb-[6px]">
              <div className="w-full max-w-[892px] border-x-2 border-b-2 border-dotted border-[#605e5c] px-[132px] pt-[90px]">
                <SalesChart />
              </div>
            </main>
            <SidePane
              name="Filters"
              className="w-[33px] border-l border-[#b3b0ad] bg-white"
              icon={<svg width="12" height="13" viewBox="0 0 12 13" className="mt-4 ml-1 shrink-0" fill="none" stroke="#252423" strokeWidth="1.300"><path d="M11.300 1v10.500L6.500 8H1V4.500h5.500Z" /></svg>}
            />
          </div>
          <PageTabs />
        </div>
        <SidePane name="Visualizations" className="w-[35px] border-l border-[#e1dfdd] bg-[#f3f2f1]" />
        <SidePane name="Data" className="w-[35px] border-l border-[#e1dfdd] bg-[#f3f2f1]" />
      </div>
      <StatusBar />
      <Taskbar />
    </div>
  );
}
